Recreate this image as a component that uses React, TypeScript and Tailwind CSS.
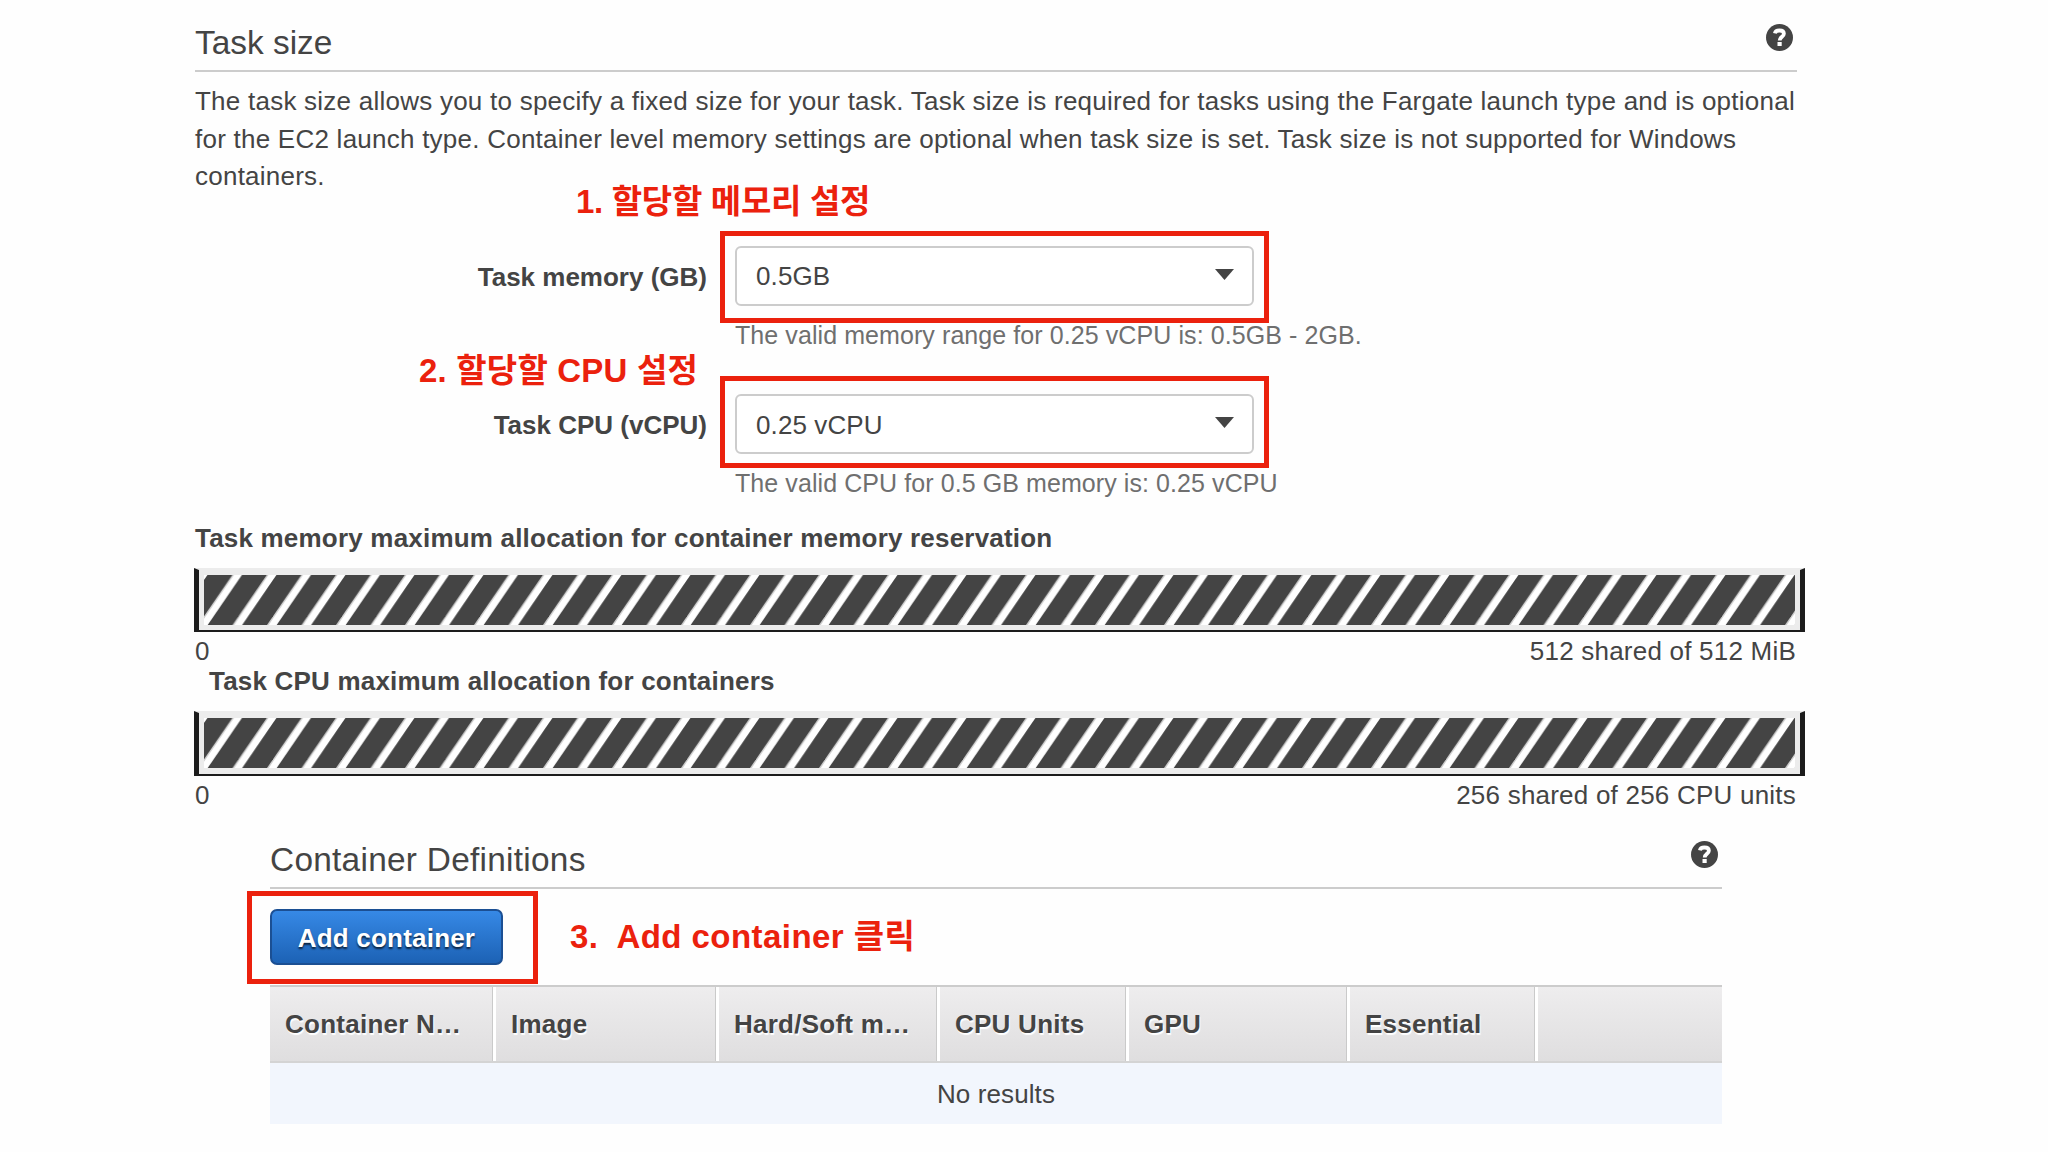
import type { ReactNode } from 'react';

const columns = [
  { label: 'Container N…', width: 'w-[226px]' },
  { label: 'Image', width: 'w-[223px]' },
  { label: 'Hard/Soft m…', width: 'w-[221px]' },
  { label: 'CPU Units', width: 'w-[189px]' },
  { label: 'GPU', width: 'w-[221px]' },
  { label: 'Essential', width: 'w-[188px]' },
  { label: '', width: 'flex-1' },
];

function HelpIcon() {
  return (
    <svg viewBox="0 0 27 27" className="mt-px h-[27px] w-[27px]">
      <circle cx="13.5" cy="13.5" r="13.5" fill="#444" />
      <path d="M8.9 9.4C9.3 7.3 11 6.5 13.4 6.5c2.8 0 4.5 1.2 4.5 3.3 0 2.9-4.2 3.2-4.2 6.7" fill="none" stroke="#fff" strokeWidth="3.8" />
      <rect x="11.5" y="18" width="4.2" height="4" fill="#fff" />
    </svg>
  );
}

function SectionHeader({ title, className }: { title: string; className: string }) {
  return (
    <div className={`flex items-start justify-between border-b-2 border-[#ccc] text-[33.4px] leading-[40px] ${className}`}>
      <h2>{title}</h2>
      <HelpIcon />
    </div>
  );
}

function Highlight({ className }: { className: string }) {
  return <div className={`pointer-events-none absolute border-[5px] border-[#eb210d] ${className}`} />;
}

function Note({ className, children }: { className: string; children: ReactNode }) {
  return (
    <p className={`absolute whitespace-pre text-[33px] font-bold leading-[40px] text-[#eb210d] ${className}`}>
      {children}
    </p>
  );
}

function SelectRow({ label, value, hint, children }: { label: string; value: string; hint: string; children?: ReactNode }) {
  return (
    <div className="relative flex">
      <label className="w-[512px] pt-px text-right font-bold leading-[60px]">{label}</label>
      <div className="ml-[28px]">
        <div className="flex h-[60px] w-[519px] items-center justify-between rounded-md border-2 border-[#ccc] bg-white pl-[19px] pr-[18px]">
          <span className="pt-[2px] tracking-[0.1px]">{value}</span>
          <svg viewBox="0 0 19 11" className="mb-[3px] h-[11px] w-[19px]">
            <path d="M0 0h19l-9.5 11z" fill="#444" />
          </svg>
        </div>
        <p className="mt-[14px] text-[25px] leading-[30px] tracking-[0.08px] text-[#6f6f6f]">{hint}</p>
      </div>
      {children}
    </div>
  );
}

function AllocationBar({ id, title, total, className }: { id: string; title: string; total: string; className: string }) {
  return (
    <div className="h-[143.3px]">
      <h3 className={`font-bold leading-[30px] tracking-[0.2px] ${className}`}>{title}</h3>
      <div className="-ml-px mt-[15px] h-[64.5px] w-[1611px] border-x-[5px] border-b-[2px] border-t-[2px] border-x-[#1c1c1c] border-b-[#1c1c1c] border-t-[#ececec] bg-[#ececec] pl-[5px] pt-[5px]">
        <svg width="1591" height="50">
          <defs>
            <pattern id={id} width="34.5" height="50" patternUnits="userSpaceOnUse">
              <rect width="34.5" height="50" fill="#fff" />
              {[0, 34.5, 69].map((x) => (
                <g key={x} transform={`translate(${x} 0)`}>
                  <path d="M3.5 0h26.5L-4.2 50h-26.5z" fill="#cfcfcf" />
                  <path d="M3.5 0h24.8L-6 50h-24.8z" fill="#444" />
                </g>
              ))}
            </pattern>
          </defs>
          <rect width="1591" height="50" fill={`url(#${id})`} />
        </svg>
      </div>
      <div className="mt-[4px] flex w-[1601px] justify-between leading-[30px] tracking-[0.22px]">
        <span>0</span>
        <span>{total}</span>
      </div>
    </div>
  );
}

export default function App() {
  return (
    <div className="h-[1152px] w-[2048px] overflow-hidden bg-[#fefefe] pl-[195px] font-['Liberation_Sans','Noto_Sans_CJK_KR',sans-serif] text-[26px] text-[#444]">
      <div className="w-[1602px]">
        {/* Task size */}
        <SectionHeader title="Task size" className="h-[72px] pr-1 pt-[23px]" />
        <p className="whitespace-pre-line pt-[11px] leading-[37.6px] tracking-[0.24px]">
          {'The task size allows you to specify a fixed size for your task. Task size is required for tasks using the Fargate launch type and is optional\nfor the EC2 launch type. Container level memory settings are optional when task size is set. Task size is not supported for Windows\ncontainers.'}
        </p>

        <div className="mt-[50px] space-y-[44.5px]">
          <SelectRow label="Task memory (GB)" value="0.5GB" hint="The valid memory range for 0.25 vCPU is: 0.5GB - 2GB.">
            <Highlight className="left-[525px] top-[-15px] h-[92px] w-[549px]" />
            <Note className="left-[381px] top-[-64px] tracking-[-0.3px]">1. 할당할 메모리 설정</Note>
          </SelectRow>
          <SelectRow label="Task CPU (vCPU)" value="0.25 vCPU" hint="The valid CPU for 0.5 GB memory is: 0.25 vCPU">
            <Highlight className="left-[525px] top-[-18px] h-[92px] w-[549px]" />
            <Note className="left-[224px] top-[-43px] tracking-[0.2px]">2. 할당할 CPU 설정</Note>
          </SelectRow>
        </div>

        <div className="mt-[24.5px]">
          <AllocationBar id="memory-stripes" title="Task memory maximum allocation for container memory reservation" total="512 shared of 512 MiB" className="" />
          <AllocationBar id="cpu-stripes" title="Task CPU maximum allocation for containers" total="256 shared of 256 CPU units" className="pl-[14px]" />
        </div>
      </div>

      {/* Container definitions */}
      <div className="ml-[75px] w-[1452px]">
        <SectionHeader title="Container Definitions" className="h-[80px] pr-[4px] pt-[31px] tracking-[0.27px]" />
        <div className="relative flex h-[96px] items-start pt-[20px]">
          <button className="h-[56px] w-[233px] rounded-[7px] border-2 border-[#1b4f93] bg-linear-to-b from-[#3689e6] to-[#1c62b5] pt-[2px] font-bold tracking-[0.2px] text-white [text-shadow:0_2px_2px_rgba(0,0,0,0.7)]">
            Add container
          </button>
          <Highlight className="left-[-23px] top-[2px] h-[93px] w-[291px]" />
          <Note className="left-[300px] top-[28px] tracking-[0.45px]">3.  Add container 클릭</Note>
        </div>
        <div className="flex h-[78px] border-t-2 border-[#ccc]">
          {columns.map((col, i) => (
            <div
              key={i}
              className={`${col.width} border-b-2 border-b-[#d4d4d4] bg-linear-to-b from-[#eeedee] to-[#dfdedf] pl-[15px] font-bold leading-[74px] tracking-[0.25px] [text-shadow:1px_2px_1px_#fff] ${
                i < columns.length - 1 ? 'shadow-[inset_-3px_0_0_#fff,inset_-4px_0_0_#cacaca]' : ''
              }`}
            >
              {col.label}
            </div>
          ))}
        </div>
        <div className="h-[61px] bg-[#f2f6fd] pt-px text-center leading-[60px] tracking-[0.1px]">No results</div>
      </div>
    </div>
  );
}
